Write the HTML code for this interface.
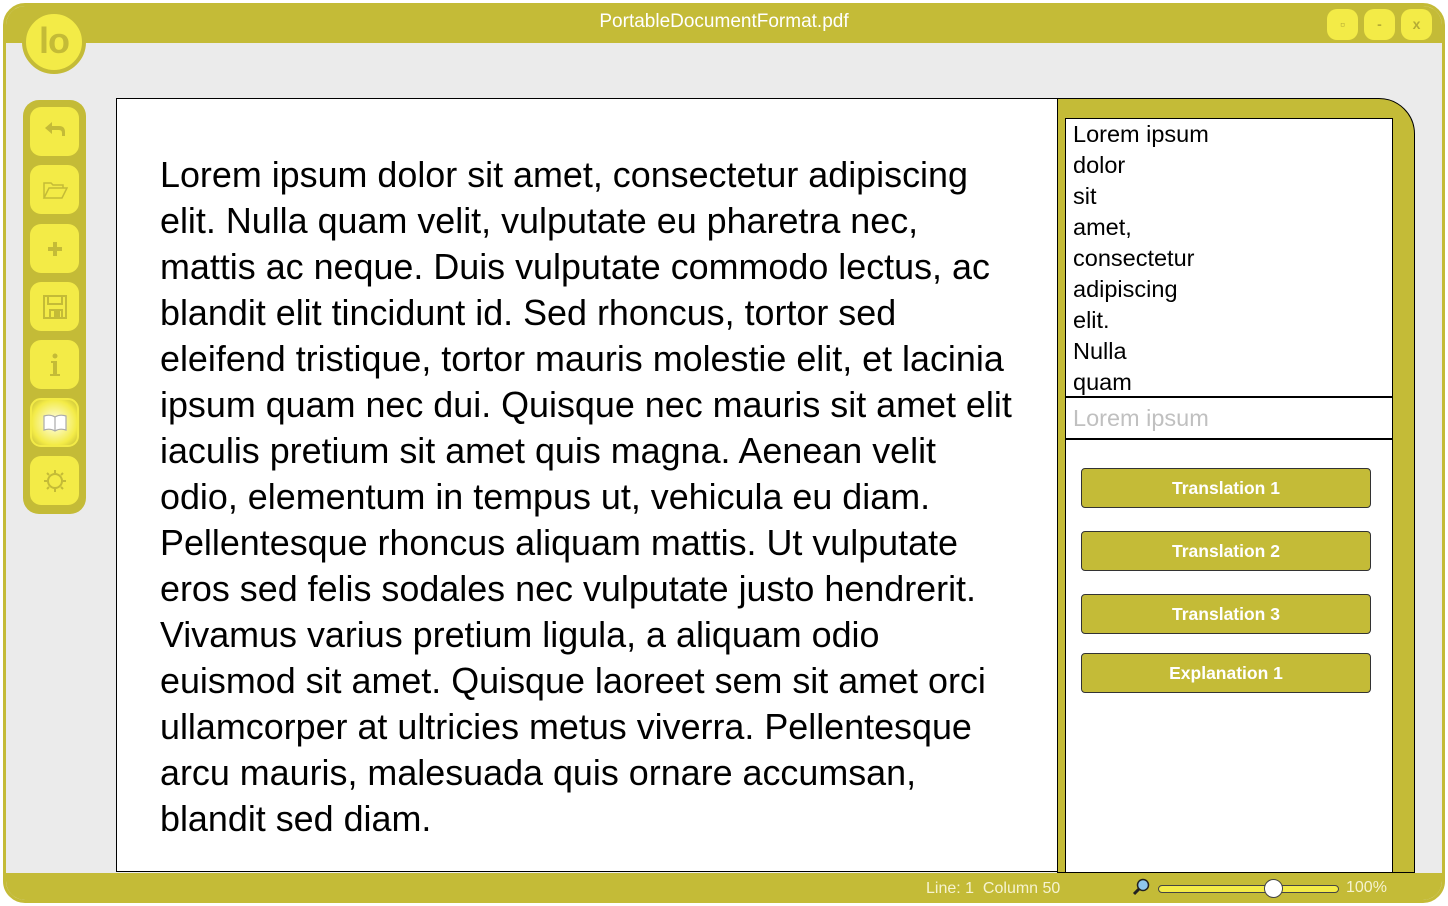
<!DOCTYPE html>
<html><head><meta charset="utf-8"><style>
*{margin:0;padding:0;box-sizing:border-box}
body{width:1448px;height:906px;background:#fff;font-family:"Liberation Sans",Arial,sans-serif;position:relative;overflow:hidden}
.win{position:absolute;left:3px;top:3px;width:1442px;height:900px;background:#ebebeb;border:3px solid #c4bb37;border-radius:22px;overflow:hidden}
.title{position:absolute;left:0;top:0;width:100%;height:37px;background:#c4bb37;color:#fff;font-size:19px;text-align:center;line-height:32px}
.wb{position:absolute;top:3px;width:31px;height:31px;background:#f3eb47;border-radius:10px;color:#b5ac35;font-size:14px;font-weight:bold;text-align:center;line-height:30px}
.logo{position:absolute;left:22px;top:10px;width:64px;height:64px;border-radius:50%;background:#f3eb47;border:4px solid #c4bb37;color:#c4bb37;font-size:36px;font-weight:bold;text-align:center;line-height:54px;letter-spacing:-1px}
.side{position:absolute;left:23px;top:100px;width:63px;height:414px;background:#c4bb37;border-radius:16px}
.btn{position:absolute;left:7px;width:49px;height:49px;background:#f3eb47;border-radius:11px}
.btn svg{position:absolute;left:12px;top:12px}
.doc{position:absolute;left:116px;top:98px;width:942px;height:774px;background:#fff;border:1px solid #000}
.txt{position:absolute;left:43px;top:53px;font-size:35.9px;line-height:46px;color:#000;white-space:nowrap}
.panel{position:absolute;left:1057px;top:98px;width:358px;height:775px;background:#c4bb37;border:1px solid #000;border-top-right-radius:36px;overflow:hidden}
.list{position:absolute;left:7px;top:19px;width:328px;height:279px;background:#fff;border:1px solid #000;font-size:23.5px;line-height:31px;padding:0 0 0 7px;color:#000}
.inp{position:absolute;left:7px;top:298px;width:328px;height:42px;background:#fff;border:1px solid #000;font-size:23.5px;line-height:40px;padding-left:7px;color:#c0c0c0}
.area{position:absolute;left:7px;top:340px;width:328px;height:440px;background:#fff;border:1px solid #000}
.tb{position:absolute;left:15px;width:290px;height:40px;background:#c4bb37;border:1px solid #333;border-radius:4px;color:#fff;font-weight:bold;font-size:17.5px;text-align:center;line-height:38px}
.status{position:absolute;left:0;top:867px;width:100%;height:33px;background:#c4bb37;color:#f6f3d0;font-size:16px}
</style></head><body>
<div class="win">
<div class="title">PortableDocumentFormat.pdf</div>
<div class="wb" style="left:1321px">▫</div>
<div class="wb" style="left:1358px">-</div>
<div class="wb" style="left:1395px">x</div>
<div class="status">
<span style="position:absolute;left:920px;top:7px">Line: 1&nbsp; Column 50</span>
<svg style="position:absolute;left:1125px;top:4px" width="20" height="20" viewBox="0 0 20 20"><line x1="3" y1="17" x2="9" y2="11" stroke="#222" stroke-width="3"/><circle cx="12" cy="8" r="5.5" fill="#8fc7ee" stroke="#222" stroke-width="1.5"/></svg>
<div style="position:absolute;left:1152px;top:12px;width:181px;height:8px;background:#f3eb47;border:1px solid #444;border-radius:4px"></div>
<div style="position:absolute;left:1258px;top:6px;width:19px;height:19px;background:#fff;border:1px solid #444;border-radius:50%"></div>
<span style="position:absolute;left:1340px;top:6px">100%</span>
</div>
</div>
<div class="logo">lo</div>
<div class="side">
<div class="btn" style="top:7px"><svg width="26" height="26" viewBox="0 0 26 26"><path d="M3 9 L10 3 V7 H17 Q23 7 23 13 V17 H20 V14 Q20 11 17 11 H10 V15 Z" fill="#c4bb37"/></svg></div>
<div class="btn" style="top:65px"><svg width="26" height="26" viewBox="0 0 26 26"><path d="M2 21 V6 H9 L11 8 H21 V11 M2 21 L7 11 H25 L20 21 Z" fill="none" stroke="#c4bb37" stroke-width="1.5"/></svg></div>
<div class="btn" style="top:124px"><svg width="26" height="26" viewBox="0 0 26 26"><path d="M11 6 H15 V11 H20 V15 H15 V20 H11 V15 H6 V11 H11 Z" fill="#c4bb37"/></svg></div>
<div class="btn" style="top:182px"><svg width="26" height="26" viewBox="0 0 26 26"><path d="M2 2 H24 V24 H2 Z M6 2 V10 H20 V2 M8 24 V16 H20 V24" fill="none" stroke="#c4bb37" stroke-width="2"/><rect x="12" y="17" width="6" height="7" fill="#c4bb37"/></svg></div>
<div class="btn" style="top:240px"><svg width="26" height="26" viewBox="0 0 26 26"><circle cx="13" cy="4" r="2.5" fill="#c4bb37"/><path d="M9 9 H15 V22 H18 V24 H8 V22 H11 V11 H9 Z" fill="#c4bb37"/></svg></div>
<div class="btn" style="top:298px;border:2px solid #f3eb47;background:radial-gradient(circle,#fffff0 0,#f3eb47 70%,#c4bb37 100%)"><svg width="26" height="26" viewBox="0 0 26 26" style="left:10px;top:10px"><path d="M2 6 Q8 4 13 7 Q18 4 24 6 V20 Q18 18 13 21 Q8 18 2 20 Z M13 7 V21" fill="#fff" stroke="#aaa" stroke-width="1.2"/></svg></div>
<div class="btn" style="top:356px"><svg width="26" height="26" viewBox="0 0 26 26"><circle cx="13" cy="13" r="7" fill="none" stroke="#c4bb37" stroke-width="2"/><path d="M13 2 V5 M13 21 V24 M2 13 H5 M21 13 H24 M5 5 L7 7 M19 19 L21 21 M21 5 L19 7 M5 21 L7 19" stroke="#c4bb37" stroke-width="2"/></svg></div>
</div>
<div class="doc"><div class="txt">Lorem ipsum dolor sit amet, consectetur adipiscing<br>elit. Nulla quam velit, vulputate eu pharetra nec,<br>mattis ac neque. Duis vulputate commodo lectus, ac<br>blandit elit tincidunt id. Sed rhoncus, tortor sed<br>eleifend tristique, tortor mauris molestie elit, et lacinia<br>ipsum quam nec dui. Quisque nec mauris sit amet elit<br>iaculis pretium sit amet quis magna. Aenean velit<br>odio, elementum in tempus ut, vehicula eu diam.<br>Pellentesque rhoncus aliquam mattis. Ut vulputate<br>eros sed felis sodales nec vulputate justo hendrerit.<br>Vivamus varius pretium ligula, a aliquam odio<br>euismod sit amet. Quisque laoreet sem sit amet orci<br>ullamcorper at ultricies metus viverra. Pellentesque<br>arcu mauris, malesuada quis ornare accumsan,<br>blandit sed diam.</div></div>
<div class="panel">
<div class="list">Lorem ipsum<br>dolor<br>sit<br>amet,<br>consectetur<br>adipiscing<br>elit.<br>Nulla<br>quam</div>
<div class="inp">Lorem ipsum</div>
<div class="area">
<div class="tb" style="top:28px">Translation 1</div>
<div class="tb" style="top:91px">Translation 2</div>
<div class="tb" style="top:154px">Translation 3</div>
<div class="tb" style="top:213px">Explanation 1</div>
</div>
</div>
</body></html>
